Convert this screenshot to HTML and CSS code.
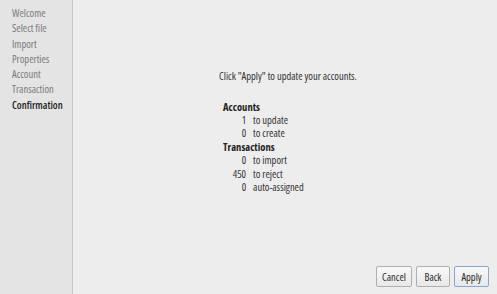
FILE: index.html
```html
<!DOCTYPE html>
<html>
<head>
<meta charset="utf-8">
<link rel="stylesheet" href="styles.css">
</head>
<body>
<div class="app">
  <nav class="sidebar">
    <div class="step">Welcome</div>
    <div class="step">Select file</div>
    <div class="step">Import</div>
    <div class="step">Properties</div>
    <div class="step">Account</div>
    <div class="step">Transaction</div>
    <div class="step current">Confirmation</div>
  </nav>
  <main class="main">
    <div class="content">
      <div class="summary">
        <p class="intro">Click "Apply" to update your accounts.</p>
        <table class="stats">
          <tr><th colspan="2">Accounts</th></tr>
          <tr><td class="num">1</td><td class="lbl">to update</td></tr>
          <tr><td class="num">0</td><td class="lbl">to create</td></tr>
          <tr><th colspan="2">Transactions</th></tr>
          <tr><td class="num">0</td><td class="lbl">to import</td></tr>
          <tr><td class="num">450</td><td class="lbl">to reject</td></tr>
          <tr><td class="num">0</td><td class="lbl">auto-assigned</td></tr>
        </table>
      </div>
    </div>
    <div class="buttons">
      <button class="btn cancel">Cancel</button>
      <button class="btn back">Back</button>
      <button class="btn apply">Apply</button>
    </div>
  </main>
</div>
</body>
</html>
```
FILE: styles.css
```css
html, body {
  margin: 0;
  padding: 0;
  width: 497px;
  height: 294px;
  overflow: hidden;
}
body {
  font-family: "Open Sans", "Roboto", sans-serif;
  font-stretch: 75%;
  font-size: 10.5px;
  color: #333;
  background: #ededed;
}
.app {
  display: flex;
  height: 294px;
}
.sidebar {
  width: 73px;
  flex: none;
  background: #e4e4e4;
  border-right: 1px solid #c8c8c8;
  padding: 6px 0 0 12px;
  box-sizing: border-box;
}
.step {
  height: 15.3px;
  line-height: 15.3px;
  color: #7a7a7a;
  white-space: nowrap;
}
.step.current {
  color: #1e1e1e;
  font-weight: 600;
}
.main {
  flex: 1;
  display: flex;
  flex-direction: column;
}
.content {
  flex: 1;
  display: flex;
  align-items: center;
  justify-content: center;
  padding: 0 0 2px 6px;
}
.intro {
  margin: 0 0 18px 0;
  line-height: 13px;
}
.stats {
  border-collapse: collapse;
  margin-left: 4px;
}
.stats th {
  text-align: left;
  font-weight: 700;
  color: #222;
  padding: 0;
  height: 13.4px;
  line-height: 13.4px;
}
.stats td {
  padding: 0;
  height: 13.4px;
  line-height: 13.4px;
}
.stats .num {
  width: 23px;
  text-align: right;
}
.stats .lbl {
  padding-left: 7px;
}
.buttons {
  display: flex;
  justify-content: flex-end;
  gap: 4px;
  padding: 0 8px 7px 0;
}
.btn {
  font-family: inherit;
  font-stretch: 75%;
  font-size: 10.5px;
  color: #2a2a2a;
  height: 21px;
  padding: 0;
  background: linear-gradient(#f8f8f8, #e8e8e8);
  border: 1px solid #b0b0b0;
  border-radius: 2px;
}
.cancel { width: 36px; }
.back { width: 34px; }
.apply {
  width: 35px;
  border-color: #86a6d6;
}
```
